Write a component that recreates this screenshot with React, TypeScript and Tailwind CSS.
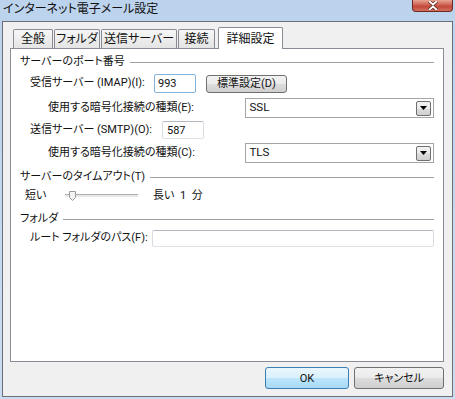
import React from 'react';

function Heading({ label, className }: { label: string; className?: string }) {
    return (
        <div className={`flex items-center h-[16px] ${className ?? ''}`}>
            <span className="leading-[16px] whitespace-nowrap">{label}</span>
            <div className="flex-1 h-px bg-[#a0a0a0] ml-[5px]" />
        </div>
    );
}

function TextBox({ value, className, focused }: { value?: string; className?: string; focused?: boolean }) {
    return (
        <div
            className={`bg-white border rounded-[2px] flex items-center leading-none ${
                focused
                    ? 'border-[#84b2de]'
                    : 'border-[#b5b8bf] border-l-[#d8dbe1] border-r-[#d8dbe1] border-b-[#dfe3e8]'
            } ${className ?? ''}`}
        >
            {value}
        </div>
    );
}

function Combo({ value }: { value: string }) {
    return (
        <div className="w-[189px] h-[20px] border border-[#a5a5a5] bg-white flex items-center pl-[3px] pr-[2px]">
            <span className="flex-1 leading-none text-[11.5px]">{value}</span>
            <div className="w-[15px] h-[15px] border border-[#707070] rounded-[2px] bg-[linear-gradient(#f2f2f2_0%,#ebebeb_50%,#dddddd_50%,#cfcfcf_100%)] flex items-center justify-center">
                <svg width="7" height="4" viewBox="0 0 7 4">
                    <path d="M0 0H7L3.5 4Z" fill="#000" />
                </svg>
            </div>
        </div>
    );
}

function Tab({ label, className }: { label: string; className?: string }) {
    return (
        <div
            className={`h-[19px] border border-b-0 border-[#898c95] rounded-t-[2px] bg-[linear-gradient(#f7f7f7,#e4e4e4)] flex items-center justify-center leading-none text-[12px] ${className ?? ''}`}
        >
            {label}
        </div>
    );
}

export default function App() {
    return (
        <div className="w-[455px] h-[399px] overflow-hidden flex flex-col bg-linear-to-b from-[#bcd3ed] to-[#cadcf1] text-[11px] text-[#111] font-['Roboto','Noto_Sans_CJK_JP',sans-serif] [font-feature-settings:'palt']">
            {/* Title bar */}
            <div className="h-[21px] flex items-start">
                <span className="ml-[3px] mt-[1px] leading-[16px] text-[12px]">インターネット電子メール設定</span>
                <div className="ml-auto mr-[2px] w-[41px] h-[12px] rounded-b-[4px] border border-t-0 border-[#6d2a22] bg-[linear-gradient(#e8a493,#c4493a_60%,#d2705d)] flex items-center justify-center">
                    <svg width="12" height="9" viewBox="0 0 12 9">
                        <path d="M2 0L6 3.5L10 0M2 9L6 5.5L10 9" stroke="#5a1f19" strokeWidth="3.2" fill="none" />
                        <path d="M2 0L6 3.5L10 0M2 9L6 5.5L10 9" stroke="#fff" strokeWidth="1.8" fill="none" />
                    </svg>
                </div>
            </div>

            {/* Client area */}
            <div className="mx-[2px] mb-[2px] flex-1 border border-[#6b6f78] bg-[#f0f0f0] flex flex-col pl-[7px] pt-[5px]">
                {/* Tabs */}
                <div className="flex items-end h-[21px] pl-[3px]">
                    <Tab label="全般" className="w-[40px]" />
                    <Tab label="フォルダ" className="w-[46px] ml-[1px]" />
                    <Tab label="送信サーバー" className="w-[76px] ml-[1px]" />
                    <Tab label="接続" className="w-[37px] ml-[1px]" />
                    <div className="relative z-10 -mb-px ml-[3px] w-[65px] h-[22px] border border-b-0 border-[#898c95] rounded-t-[2px] bg-white flex items-center justify-center leading-none text-[12px]">
                        詳細設定
                    </div>
                </div>

                {/* Panel */}
                <div className="w-[434px] h-[314px] border border-[#898c95] bg-white flex flex-col pl-[9px] pr-[9px] pt-[5px]">
                    <Heading label="サーバーのポート番号" />

                    <div className="flex items-center mt-[4px] h-[19px] pl-[10px]">
                        <span className="w-[124px] whitespace-nowrap">受信サーバー (IMAP)(I):</span>
                        <TextBox value="993" focused className="w-[42px] h-[19px] pl-[3px]" />
                        <button className="ml-[10px] w-[81px] h-[18px] border border-[#707070] rounded-[3px] bg-[linear-gradient(#f2f2f2_0%,#ebebeb_50%,#dddddd_50%,#cfcfcf_100%)] leading-none flex items-center justify-center">
                            標準設定(D)
                        </button>
                    </div>

                    <div className="flex items-center mt-[5px] h-[20px] pl-[28px]">
                        <span className="w-[198px] whitespace-nowrap">使用する暗号化接続の種類(E):</span>
                        <Combo value="SSL" />
                    </div>

                    <div className="flex items-center mt-[3px] h-[18px] pl-[10px]">
                        <span className="w-[132px] whitespace-nowrap">送信サーバー (SMTP)(O):</span>
                        <TextBox value="587" className="w-[42px] h-[18px] pl-[4px]" />
                    </div>

                    <div className="flex items-center mt-[4px] h-[20px] pl-[28px]">
                        <span className="w-[198px] whitespace-nowrap">使用する暗号化接続の種類(C):</span>
                        <Combo value="TLS" />
                    </div>

                    <Heading label="サーバーのタイムアウト(T)" className="mt-[6px]" />

                    <div className="flex items-center mt-[3px] h-[16px] pl-[5px]">
                        <span className="w-[36px]">短い</span>
                        <svg width="92" height="16" viewBox="0 0 92 16">
                            <rect x="4" y="6" width="73" height="1" fill="#b0b0b0" />
                            <rect x="4" y="7" width="73" height="2" fill="#e6e8ea" />
                            <path d="M8.5 3.5H14.5V9.5L11.5 12.5L8.5 9.5Z" fill="#f4f4f4" stroke="#9a9a9a" />
                        </svg>
                        <span className="w-[27px]">長い</span>
                        <span className="whitespace-pre">1  分</span>
                    </div>

                    <Heading label="フォルダ" className="mt-[7px]" />

                    <div className="flex items-center mt-[3px] h-[17px] pl-[10px]">
                        <span className="w-[122px] whitespace-nowrap">ルート フォルダのパス(F):</span>
                        <TextBox className="w-[283px] h-[17px]" />
                    </div>
                </div>

                {/* Buttons */}
                <div className="w-[434px] flex justify-end gap-[5px] mt-[5px]">
                    <button className="w-[84px] h-[22px] border border-[#3c7fb1] rounded-[3px] bg-[linear-gradient(#eaf6fd_0%,#d9f0fc_50%,#bee6fd_50%,#a7d9f5_100%)] leading-none flex items-center justify-center">
                        OK
                    </button>
                    <button className="w-[90px] h-[22px] border border-[#707070] rounded-[3px] bg-[linear-gradient(#f2f2f2_0%,#ebebeb_50%,#dddddd_50%,#cfcfcf_100%)] leading-none flex items-center justify-center">
                        キャンセル
                    </button>
                </div>
            </div>
        </div>
    );
}
